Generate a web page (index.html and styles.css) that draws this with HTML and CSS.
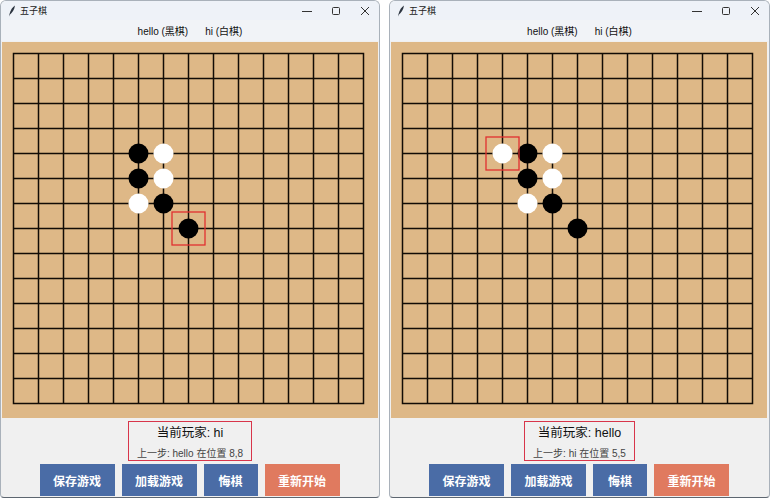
FILE: index.html
```html
<!DOCTYPE html>
<html lang="zh-CN">

<head>
  <meta charset="UTF-8" />
  <title>五子棋</title>
  <link rel="stylesheet" href="styles.css">
</head>

<body>
  <div class="desk">

    <div class="window">
      <div class="titlebar">
        <svg class="app-icon" width="8" height="12" viewBox="0 0 8 12">
          <path d="M7 0.5C4.5 2 2.5 5 1.5 9L1 11.5L2 9.5C4 8 6.5 4.5 7 0.5Z" fill="#2b3440" />
        </svg>
        <span class="title">五子棋</span>
        <div class="controls">
          <svg width="10" height="10" viewBox="0 0 10 10"><path d="M0 5.5H10" stroke="#333" stroke-width="1" /></svg>
          <svg width="10" height="10" viewBox="0 0 10 10"><rect x="1.5" y="1.5" width="7" height="7" rx="1" fill="none" stroke="#333" stroke-width="1" /></svg>
          <svg width="10" height="10" viewBox="0 0 10 10"><path d="M1 1L9 9M9 1L1 9" stroke="#333" stroke-width="1" /></svg>
        </div>
      </div>
      <div class="players">
        <span>hello (黑棋)</span>
        <span>hi (白棋)</span>
      </div>
      <div class="board-wrap">
        <svg class="board" width="376" height="376" viewBox="0 0 376 376">
          <defs>
            <path id="grid" fill="none" stroke="#120c06" stroke-width="1.5" stroke-linecap="square"
              d="M11.5 11.5h350m-350 25h350m-350 25h350m-350 25h350m-350 25h350m-350 25h350m-350 25h350m-350 25h350m-350 25h350m-350 25h350m-350 25h350m-350 25h350m-350 25h350m-350 25h350m-350 25h350
                 M11.5 11.5v350m25 -350v350m25 -350v350m25 -350v350m25 -350v350m25 -350v350m25 -350v350m25 -350v350m25 -350v350m25 -350v350m25 -350v350m25 -350v350m25 -350v350m25 -350v350m25 -350v350" />
          </defs>
          <rect width="376" height="376" fill="#deb887" />
          <use href="#grid" />
          <circle cx="136.5" cy="111.5" r="10" fill="#000" />
          <circle cx="161.5" cy="111.5" r="10" fill="#fff" />
          <circle cx="136.5" cy="136.5" r="10" fill="#000" />
          <circle cx="161.5" cy="136.5" r="10" fill="#fff" />
          <circle cx="136.5" cy="161.5" r="10" fill="#fff" />
          <circle cx="161.5" cy="161.5" r="10" fill="#000" />
          <circle cx="186.5" cy="186.5" r="10" fill="#000" />
          <rect x="170" y="170" width="33" height="33" fill="none" stroke="#e03030" stroke-width="1.3" />
        </svg>
      </div>
      <div class="status">
        <div class="status-box">
          <div class="current">当前玩家: <b>hi</b></div>
          <div class="last">上一步: hello 在位置 8,8</div>
        </div>
      </div>
      <div class="actions">
        <button class="btn">保存游戏</button>
        <button class="btn">加载游戏</button>
        <button class="btn btn-narrow">悔棋</button>
        <button class="btn btn-reset">重新开始</button>
      </div>
    </div>

    <div class="window">
      <div class="titlebar">
        <svg class="app-icon" width="8" height="12" viewBox="0 0 8 12">
          <path d="M7 0.5C4.5 2 2.5 5 1.5 9L1 11.5L2 9.5C4 8 6.5 4.5 7 0.5Z" fill="#2b3440" />
        </svg>
        <span class="title">五子棋</span>
        <div class="controls">
          <svg width="10" height="10" viewBox="0 0 10 10"><path d="M0 5.5H10" stroke="#333" stroke-width="1" /></svg>
          <svg width="10" height="10" viewBox="0 0 10 10"><rect x="1.5" y="1.5" width="7" height="7" rx="1" fill="none" stroke="#333" stroke-width="1" /></svg>
          <svg width="10" height="10" viewBox="0 0 10 10"><path d="M1 1L9 9M9 1L1 9" stroke="#333" stroke-width="1" /></svg>
        </div>
      </div>
      <div class="players">
        <span>hello (黑棋)</span>
        <span>hi (白棋)</span>
      </div>
      <div class="board-wrap">
        <svg class="board" width="376" height="376" viewBox="0 0 376 376">
          <rect width="376" height="376" fill="#deb887" />
          <use href="#grid" />
          <circle cx="111.5" cy="111.5" r="10" fill="#fff" />
          <circle cx="136.5" cy="111.5" r="10" fill="#000" />
          <circle cx="161.5" cy="111.5" r="10" fill="#fff" />
          <circle cx="136.5" cy="136.5" r="10" fill="#000" />
          <circle cx="161.5" cy="136.5" r="10" fill="#fff" />
          <circle cx="136.5" cy="161.5" r="10" fill="#fff" />
          <circle cx="161.5" cy="161.5" r="10" fill="#000" />
          <circle cx="186.5" cy="186.5" r="10" fill="#000" />
          <rect x="95" y="95" width="33" height="33" fill="none" stroke="#e03030" stroke-width="1.3" />
        </svg>
      </div>
      <div class="status">
        <div class="status-box">
          <div class="current">当前玩家: <b>hello</b></div>
          <div class="last">上一步: hi 在位置 5,5</div>
        </div>
      </div>
      <div class="actions">
        <button class="btn">保存游戏</button>
        <button class="btn">加载游戏</button>
        <button class="btn btn-narrow">悔棋</button>
        <button class="btn btn-reset">重新开始</button>
      </div>
    </div>

  </div>
</body>

</html>
```

FILE: styles.css
```css
body {
  margin: 0;
  background-color: #fff;
  font-family: 'Liberation Sans', Arial, 'Noto Sans CJK SC', sans-serif;
  color: #111;
}

.desk {
  display: flex;
  gap: 9px;
}

.window {
  width: 378px;
  height: 496px;
  border: 1px solid #a9b1ba;
  border-bottom-color: #5d6670;
  border-radius: 6px 6px 4px 4px;
  background-color: #f0f0f0;
  overflow: hidden;
}

.window + .window {
  width: 379px;
}

.titlebar {
  height: 19px;
  display: flex;
  align-items: center;
  padding-left: 7px;
  background-color: #eef2f8;
}

.app-icon {
  margin-right: 4px;
}

.title {
  font-size: 9px;
  font-family: 'Noto Sans CJK SC', sans-serif;
  color: #222;
}

.controls {
  margin-left: auto;
  display: flex;
  gap: 19px;
  padding-right: 9px;
}

.players {
  height: 21px;
  display: flex;
  justify-content: center;
  align-items: center;
  gap: 17px;
  font-size: 10px;
  background-color: #f1f3f7;
}

.board-wrap {
  padding: 1px 1px 0;
  height: 376px;
}

.board {
  display: block;
}

.status {
  display: flex;
  justify-content: center;
  margin-top: 3px;
}

.status-box {
  height: 36px;
  padding: 1px 8px 1px;
  border: 1.5px solid #d8354a;
  display: flex;
  flex-direction: column;
  align-items: center;
  justify-content: center;
  gap: 4px;
}

.current {
  font-size: 12.5px;
  color: #111;
}

.current b {
  font-weight: normal;
}

.last {
  font-size: 10px;
  color: #444;
}

.actions {
  display: flex;
  justify-content: center;
  gap: 7px;
  margin-top: 3px;
  padding-right: 1px;
}

.btn {
  width: 75px;
  height: 32px;
  border: none;
  background-color: #4a6ca6;
  color: #fff;
  font-family: 'Noto Sans CJK SC', sans-serif;
  font-weight: bold;
  font-size: 12px;
  padding: 0;
}

.btn-narrow {
  width: 54px;
}

.btn-reset {
  background-color: #e07a5f;
}
```
